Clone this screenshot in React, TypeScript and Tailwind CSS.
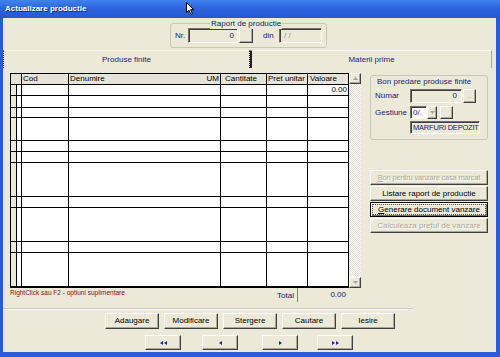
import React from "react";

const bodyRows = [
  "h-[11px]",
  "h-[12px]",
  "h-[10px]",
  "h-[23px]",
  "h-[11px]",
  "h-[11px]",
  "h-[34px]",
  "h-[11px]",
  "h-[34px]",
  "h-[11px]",
  "h-[35px]",
];

const cols = "grid grid-cols-[6px_5px_47px_152px_46px_41px_41px]";

function Arrow({ dir }: { dir: "up" | "down" }) {
  return (
    <svg width="5" height="3" viewBox="0 0 5 3" className="text-[#A5A394]">
      {dir === "up" ? (
        <path d="M0 3 L2.5 0 L5 3 Z" fill="currentColor" />
      ) : (
        <path d="M0 0 L2.5 3 L5 0 Z" fill="currentColor" />
      )}
    </svg>
  );
}

function NavIcon({ kind }: { kind: "first" | "prev" | "next" | "last" }) {
  return (
    <svg width="7" height="4" viewBox="0 0 7 4" className="text-[#1B2A8C]">
      {kind === "first" && (
        <>
          <path d="M3 0 L0 2 L3 4 Z" fill="currentColor" />
          <path d="M7 0 L4 2 L7 4 Z" fill="currentColor" />
        </>
      )}
      {kind === "prev" && <path d="M5 0 L2 2 L5 4 Z" fill="currentColor" />}
      {kind === "next" && <path d="M2 0 L5 2 L2 4 Z" fill="currentColor" />}
      {kind === "last" && (
        <>
          <path d="M0 0 L3 2 L0 4 Z" fill="currentColor" />
          <path d="M4 0 L7 2 L4 4 Z" fill="currentColor" />
        </>
      )}
    </svg>
  );
}

const btn3d =
  "flex items-center justify-center bg-[#ECE9D8] border border-t-white border-l-white border-r-[#404040] border-b-[#404040] shadow-[inset_-1px_-1px_0_#ACA899]";

function Sunken({ className, children }: { className: string; children?: React.ReactNode }) {
  return (
    <div
      className={`flex items-center whitespace-nowrap border border-t-[#716F64] border-l-[#716F64] border-r-white border-b-white shadow-[inset_1px_1px_0_#404040] ${className}`}
    >
      {children}
    </div>
  );
}

export default function App() {
  return (
    <div className="relative flex h-[357px] w-[500px] flex-col overflow-hidden bg-[#2A5BD7] font-['Liberation_Sans',Arial,sans-serif] text-[8px] leading-[10px] text-black">
      {/* title bar */}
      <div className="flex h-[18px] items-center bg-linear-to-b from-[#3F82EE] via-[#2C63DB] to-[#2459D4] pl-[5px] text-[8px] font-bold text-white [text-shadow:1px_1px_0_#0B2B8A]">
        Actualizare productie
      </div>

      <div className="mb-[5px] ml-[3px] mr-[4px] flex flex-1 flex-col bg-[#ECE9D8]">
        {/* raport de productie */}
        <div className="relative ml-[167px] mt-[5px] h-[25px] w-[157px] rounded-[3px] border border-[#C9C7B8]">
          <span className="absolute -top-[5px] left-[39px] bg-[#ECE9D8] px-[1px] text-[#142070]">
            Raport de productie
          </span>
          <div className="flex items-center pl-[4px] pt-[4px]">
            <span className="w-[13px] text-[#142070]">Nr.</span>
            <Sunken className="h-[15px] w-[50px] justify-end bg-[#ECE9D8] pr-[3px] text-[#142070]">0</Sunken>
            <div className={`${btn3d} ml-[1px] h-[15px] w-[14px]`} />
            <span className="ml-[10px] w-[16px] text-[#142070]">din</span>
            <Sunken className="h-[15px] w-[43px] bg-[#ECE9D8] pl-[4px] text-[#8A8A8A]"> / /</Sunken>
          </div>
        </div>

        {/* tabs */}
        <div className="mt-[2px] flex h-[18px]">
          <div className="flex w-[247px] items-center justify-center border-x border-t border-dotted border-x-black border-t-white text-[#1A2478]">
            Produse finite
          </div>
          <div className="flex w-[242px] items-center justify-center border-l-2 border-r border-t border-l-[#202020] border-r-[#ACA899] border-t-white text-[#1A2478]">
            Materii prime
          </div>
        </div>

        {/* main region */}
        <div className="mt-[5px] flex pl-[7px]">
          <div className="flex w-[351px] flex-col">
            <div className="flex">
              <div className="flex w-[339px] flex-col border-l border-t border-black">
                <div className={`${cols} h-[11px] bg-[#E6E4D8]`}>
                  <div className="col-span-2 border-b border-r border-black" />
                  <div className="border-b border-r border-black pl-[1px]">Cod</div>
                  <div className="flex justify-between border-b border-r border-black px-[1px]">
                    <span>Denumire</span>
                    <span>UM</span>
                  </div>
                  <div className="border-b border-r border-black pl-[4px]">Cantitate</div>
                  <div className="border-b border-r border-black pl-[1px]">Pret unitar</div>
                  <div className="border-b border-r border-black pl-[2px]">Valoare</div>
                </div>
                {bodyRows.map((h, i) => {
                  const last = i === bodyRows.length - 1;
                  const b = last ? "border-b-2 border-r border-black" : "border-b border-r border-black";
                  return (
                    <div key={i} className={`${cols} ${h} bg-white`}>
                      <div className={`${b} bg-[#ECE9D8]`} />
                      <div className={b} />
                      <div className={b} />
                      <div className={b} />
                      <div className={b} />
                      <div className={b} />
                      <div className={`${b} flex items-end justify-end pr-[1px]`}>{i === 0 ? "0.00" : ""}</div>
                    </div>
                  );
                })}
              </div>
              {/* scrollbar */}
              <div className="flex h-[215px] w-[12px] flex-col bg-[repeating-conic-gradient(#ffffff_0%_25%,#E3E0D3_0%_50%)] bg-size-[2px_2px]">
                <div className={`${btn3d} h-[11px]`}>
                  <Arrow dir="up" />
                </div>
                <div className="flex-1" />
                <div className={`${btn3d} h-[11px]`}>
                  <Arrow dir="down" />
                </div>
              </div>
            </div>
            <div className="flex h-[14px] items-start">
              <span className="mt-[1px] text-[6.5px] leading-[8px] text-[#8B1010]">
                RightClick sau F2 - optiuni suplimentare
              </span>
              <div className="flex-1" />
              <span className="mr-[3px] mt-[3px] text-[#142070]">Total</span>
              <div className="mr-[12px] flex h-[14px] w-[52px] items-center justify-end border-l border-[#8A877A] pr-[3px] text-[#142070]">
                0.00
              </div>
            </div>
          </div>

          {/* right panel */}
          <div className="ml-[9px] flex w-[118px] flex-col">
            <div className="mt-[2px] flex h-[65px] flex-col rounded-[3px] border border-[#C9C7B8] pl-[4px]">
              <span className="ml-[2px] mt-[1px] text-[#1A2478]">Bon predare produse finite</span>
              <div className="mt-[2px] flex items-center">
                <span className="w-[35px] text-[#142070]">Numar</span>
                <Sunken className="h-[14px] w-[52px] justify-end pr-[4px] text-[#142070]">0</Sunken>
                <div className={`${btn3d} ml-[1px] h-[14px] w-[13px] text-[#ACA899]`}>..</div>
              </div>
              <div className="mt-[3px] flex items-center">
                <span className="w-[35px] text-[#142070]">Gestiune</span>
                <Sunken className="h-[13px] w-[17px] bg-white pl-[2px] text-[#142070]">0/.</Sunken>
                <div className={`${btn3d} h-[13px] w-[10px]`}>
                  <Arrow dir="down" />
                </div>
                <div className={`${btn3d} ml-[3px] h-[13px] w-[13px]`} />
              </div>
              <div className="mt-[2px] flex">
                <div className="w-[35px]" />
                <Sunken className="h-[13px] w-[70px] pl-[2px] text-[7.5px] tracking-[-0.2px] text-[#142070]">
                  MARFURI DEPOZIT
                </Sunken>
              </div>
            </div>

            <div className="mt-[30px] flex flex-col gap-[1px] whitespace-nowrap">
              <div className={`${btn3d} h-[15px] text-[7.5px] tracking-[-0.2px] text-[#ACA899] [text-shadow:1px_1px_0_#fff]`}>
                <span>
                  <span className="underline">B</span>on pentru vanzare casa marcat
                </span>
              </div>
              <div className={`${btn3d} h-[15px]`}>Listare raport de productie</div>
              <div className="flex h-[15px] border border-black bg-[#ECE9D8] p-[1px] shadow-[inset_1px_1px_0_#fff,inset_-1px_-1px_0_#716F64]">
                <div className="flex flex-1 items-center justify-center border border-dotted border-[#555]">
                  <span>
                    <span className="underline">G</span>enerare document vanzare
                  </span>
                </div>
              </div>
              <div className={`${btn3d} h-[15px] text-[#ACA899] [text-shadow:1px_1px_0_#fff]`}>
                Calculeaza pretul de vanzare
              </div>
            </div>
          </div>
        </div>

        {/* separator */}
        <div className="mt-[6px] h-[2px] w-[410px] border-b border-t border-b-white border-t-[#CAC8B9]" />

        {/* action buttons */}
        <div className="ml-[102px] mt-[3px] flex gap-[5px]">
          {["Adaugare", "Modificare", "Stergere", "Cautare", "Iesire"].map((t) => (
            <div key={t} className={`${btn3d} h-[16px] w-[54px]`}>
              {t}
            </div>
          ))}
        </div>

        {/* navigation */}
        <div className="ml-[142px] mt-[6px] flex">
          <div className={`${btn3d} h-[15px] w-[36px]`}>
            <NavIcon kind="first" />
          </div>
          <div className={`${btn3d} ml-[21px] h-[15px] w-[36px]`}>
            <NavIcon kind="prev" />
          </div>
          <div className={`${btn3d} ml-[24px] h-[15px] w-[36px]`}>
            <NavIcon kind="next" />
          </div>
          <div className={`${btn3d} ml-[19px] h-[15px] w-[36px]`}>
            <NavIcon kind="last" />
          </div>
        </div>
      </div>

      {/* mouse pointer */}
      <svg className="absolute left-[186px] top-[2px]" width="9" height="13" viewBox="0 0 9 13">
        <path d="M0.5 0.5 L0.5 10.5 L3 8.3 L4.8 12.3 L6.4 11.6 L4.6 7.7 L7.8 7.7 Z" fill="#fff" stroke="#000" strokeWidth="1" />
      </svg>
    </div>
  );
}
